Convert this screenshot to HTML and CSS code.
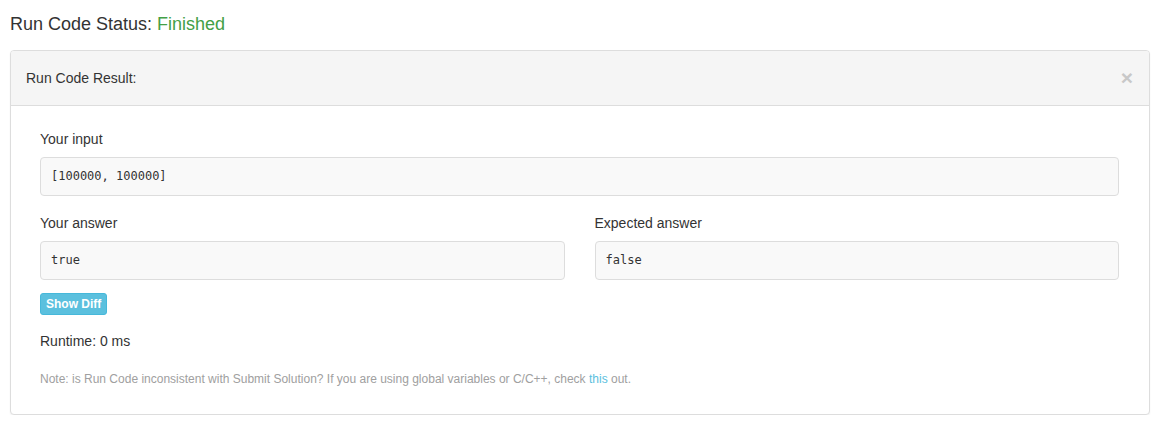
FILE: index.html
```html
<!DOCTYPE html>
<html>
<head>
<meta charset="utf-8">
<link rel="stylesheet" href="styles.css">
</head>
<body>
<div class="page">
  <div class="status">Run Code Status: <span class="finished">Finished</span></div>
  <div class="panel">
    <div class="panel-heading">
      <span>Run Code Result:</span>
      <span class="close">×</span>
    </div>
    <div class="panel-body">
      <div class="label first">Your input</div>
      <pre class="box">[100000, 100000]</pre>
      <div class="cols">
        <div class="col">
          <div class="label">Your answer</div>
          <pre class="box">true</pre>
        </div>
        <div class="col">
          <div class="label">Expected answer</div>
          <pre class="box">false</pre>
        </div>
      </div>
      <div class="btn-row"><button class="btn">Show Diff</button></div>
      <div class="runtime">Runtime: 0 ms</div>
      <div class="note">Note: is Run Code inconsistent with Submit Solution? If you are using global variables or C/C++, check <a class="link">this</a> out.</div>
    </div>
  </div>
</div>
</body>
</html>
```
FILE: styles.css
```css
html, body {
  margin: 0;
  padding: 0;
  background: #fff;
}
body {
  font-family: "Liberation Sans", Arial, sans-serif;
  color: #333;
  font-size: 14px;
}
.page {
  padding: 0 14px 0 10px;
}
.status {
  font-size: 18px;
  line-height: 20px;
  margin-top: 14px;
  margin-bottom: 16px;
  color: #333;
}
.finished {
  color: #43a047;
}
.panel {
  border: 1px solid #ddd;
  border-radius: 4px;
  background: #fff;
  box-shadow: 0 1px 2px rgba(0, 0, 0, 0.06);
}
.panel-heading {
  background: #f5f5f5;
  border-bottom: 1px solid #ddd;
  border-radius: 3px 3px 0 0;
  padding: 17px 15px 17px 15px;
  line-height: 20px;
  display: flex;
  justify-content: space-between;
  align-items: center;
}
.close {
  font-size: 21px;
  font-weight: bold;
  color: #c8c8c8;
  line-height: 20px;
  margin-right: 1px;
}
.panel-body {
  padding: 23px 30px 26px 29px;
}
.label {
  line-height: 20px;
  margin-bottom: 8px;
}
.box {
  margin: 0 0 17px 0;
  padding: 10px 10px;
  font-family: "DejaVu Sans Mono", "Liberation Mono", monospace;
  font-size: 12px;
  line-height: 17px;
  background: #f9f9f9;
  border: 1px solid #ddd;
  border-radius: 4px;
  color: #333;
}
.cols {
  display: grid;
  grid-template-columns: 1fr 1fr;
  column-gap: 30px;
}
.cols .box {
  margin-bottom: 13px;
}
.btn-row {
  display: flex;
}
.btn {
  font-family: "Liberation Sans", Arial, sans-serif;
  font-size: 12px;
  font-weight: bold;
  line-height: 18px;
  padding: 1px 5px;
  color: #fff;
  background: #5bc0de;
  border: 1px solid #46b8da;
  border-radius: 3px;
  margin: 0;
}
.runtime {
  margin-top: 16px;
  line-height: 20px;
}
.note {
  margin-top: 20px;
  font-size: 12px;
  line-height: 17px;
  color: #a0a0a0;
}
.link {
  color: #5bc0de;
}
```
